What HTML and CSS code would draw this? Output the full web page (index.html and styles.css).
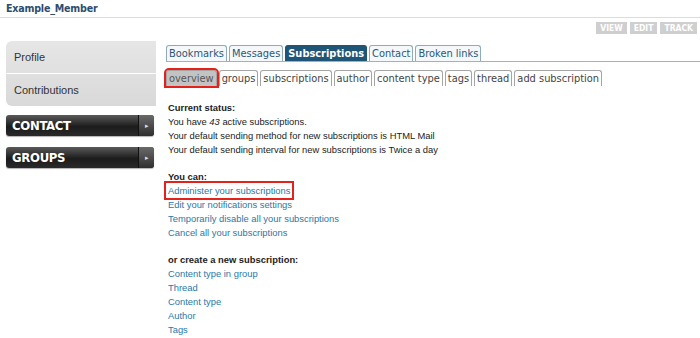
FILE: index.html
```html
<!DOCTYPE html>
<html lang="en">
<head>
  <meta charset="UTF-8" />
  <title>Example_Member - Subscriptions</title>
  <link rel="stylesheet" href="styles.css">
</head>
<body>

  <header class="page-header">
    <h1>Example_Member</h1>
  </header>

  <div class="actions">
    <a class="action-btn">VIEW</a>
    <a class="action-btn">EDIT</a>
    <a class="action-btn">TRACK</a>
  </div>

  <div class="layout">
    <aside class="sidebar">
      <ul class="side-menu">
        <li>Profile</li>
        <li>Contributions</li>
      </ul>
      <div class="side-block">
        <span class="side-label">CONTACT</span>
        <span class="side-arrow">&#9656;</span>
      </div>
      <div class="side-block">
        <span class="side-label">GROUPS</span>
        <span class="side-arrow">&#9656;</span>
      </div>
    </aside>

    <main class="content">
      <ul class="tabs primary">
        <li>Bookmarks</li>
        <li>Messages</li>
        <li class="active">Subscriptions</li>
        <li>Contact</li>
        <li>Broken links</li>
      </ul>
      <ul class="tabs secondary">
        <li class="active marked">overview</li>
        <li>groups</li>
        <li>subscriptions</li>
        <li>author</li>
        <li>content type</li>
        <li>tags</li>
        <li>thread</li>
        <li>add subscription</li>
      </ul>

      <div class="section">
        <strong>Current status:</strong>
        <div>You have <em>43</em> active subscriptions.</div>
        <div>Your default sending method for new subscriptions is HTML Mail</div>
        <div>Your default sending interval for new subscriptions is Twice a day</div>
      </div>

      <div class="section">
        <strong>You can:</strong>
        <div><a class="marked-link">Administer your subscriptions</a></div>
        <div><a>Edit your notifications settings</a></div>
        <div><a>Temporarily disable all your subscriptions</a></div>
        <div><a>Cancel all your subscriptions</a></div>
      </div>

      <div class="section">
        <strong>or create a new subscription:</strong>
        <div><a>Content type in group</a></div>
        <div><a>Thread</a></div>
        <div><a>Content type</a></div>
        <div><a>Author</a></div>
        <div><a>Tags</a></div>
      </div>
    </main>
  </div>

</body>
</html>
```

FILE: styles.css
```css
body {
  font-family: 'Liberation Sans', Arial, sans-serif;
  margin: 0;
  background: #fff;
  color: #222;
  font-size: 9.4px;
}
.page-header {
  border-bottom: 1px solid #dcdcdc;
  padding: 2px 6px 2px;
}
.page-header h1 {
  font-family: 'DejaVu Sans Condensed', 'DejaVu Sans', sans-serif;
  font-size: 10.6px;
  font-weight: bold;
  color: #2c4d6e;
  margin: 0;
  line-height: 13px;
  letter-spacing: -0.2px;
}
.actions {
  display: flex;
  justify-content: flex-end;
  gap: 3px;
  padding: 4px 3px 0 0;
}
.action-btn {
  background: #cfcfcf;
  color: #fff;
  font-family: 'DejaVu Sans Condensed', sans-serif;
  font-size: 8.5px;
  font-weight: bold;
  line-height: 12px;
  padding: 0 4px;
}
.layout {
  display: flex;
  padding: 7px 0 0 6px;
}
.sidebar { width: 150px; flex: none; }
.side-menu {
  list-style: none;
  margin: 0 0 9px;
  padding: 0;
  background: linear-gradient(#e6e6e6, #d9d9d9);
  border-radius: 6px 0 0 6px;
}
.side-menu li {
  font-size: 11px;
  color: #333;
  padding: 0 8px;
  height: 32px;
  line-height: 32px;
}
.side-menu li + li {
  border-top: 1px solid #fff;
}
.side-block {
  display: flex;
  height: 21px;
  width: 148px;
  margin-bottom: 11px;
  border-radius: 3px;
  background: linear-gradient(#5a5a5a, #1c1c1c 55%, #2a2a2a);
  box-shadow: 0 1px 1px rgba(0,0,0,0.3);
}
.side-label {
  flex: 1;
  font-family: 'DejaVu Sans Condensed', sans-serif;
  font-weight: bold;
  font-size: 13px;
  color: #fff;
  line-height: 21px;
  padding-left: 6px;
  letter-spacing: -0.3px;
}
.side-arrow {
  width: 15px;
  border-left: 1px solid #111;
  background: linear-gradient(#6a6a6a, #2e2e2e);
  border-radius: 0 3px 3px 0;
  color: #ddd;
  font-size: 7px;
  line-height: 21px;
  text-align: center;
}
.content { flex: 1; padding-left: 10px; }
.tabs {
  list-style: none;
  margin: 0;
  padding: 0;
  display: flex;
  gap: 2px;
  font-family: 'DejaVu Sans', Verdana, sans-serif;
  font-size: 9.85px;
}
.tabs li {
  padding: 0 2px;
  line-height: 15px;
  border-radius: 3px 3px 0 0;
}
.primary {
  margin-top: 4px;
  border-bottom: 1px solid #9db3c4;
}
.primary li {
  border: 1px solid #8fa9bd;
  border-bottom: none;
  color: #2b5778;
  background: #f5f8fa;
}
.primary li.active {
  background: #1f5577;
  border-color: #1f5577;
  color: #fff;
  font-weight: bold;
}
.secondary {
  margin-top: 8px;
}
.secondary li {
  border: 1px solid #a5a5a5;
  border-bottom: none;
  color: #444;
  background: #fff;
}
.secondary li.active {
  background: #c3c3c3;
  color: #555;
}
.marked {
  outline: 2px solid #e3231b;
  outline-offset: 0;
}
.section {
  line-height: 14px;
  padding-left: 2px;
}
.section div,
.section strong {
  display: block;
  height: 14px;
}
.section:first-of-type { margin-top: 15px; }
.section + .section { margin-top: 13px; }
.section a { color: #2a78aa; }
.marked-link {
  outline: 2px solid #e3231b;
  outline-offset: 2px;
}
```
